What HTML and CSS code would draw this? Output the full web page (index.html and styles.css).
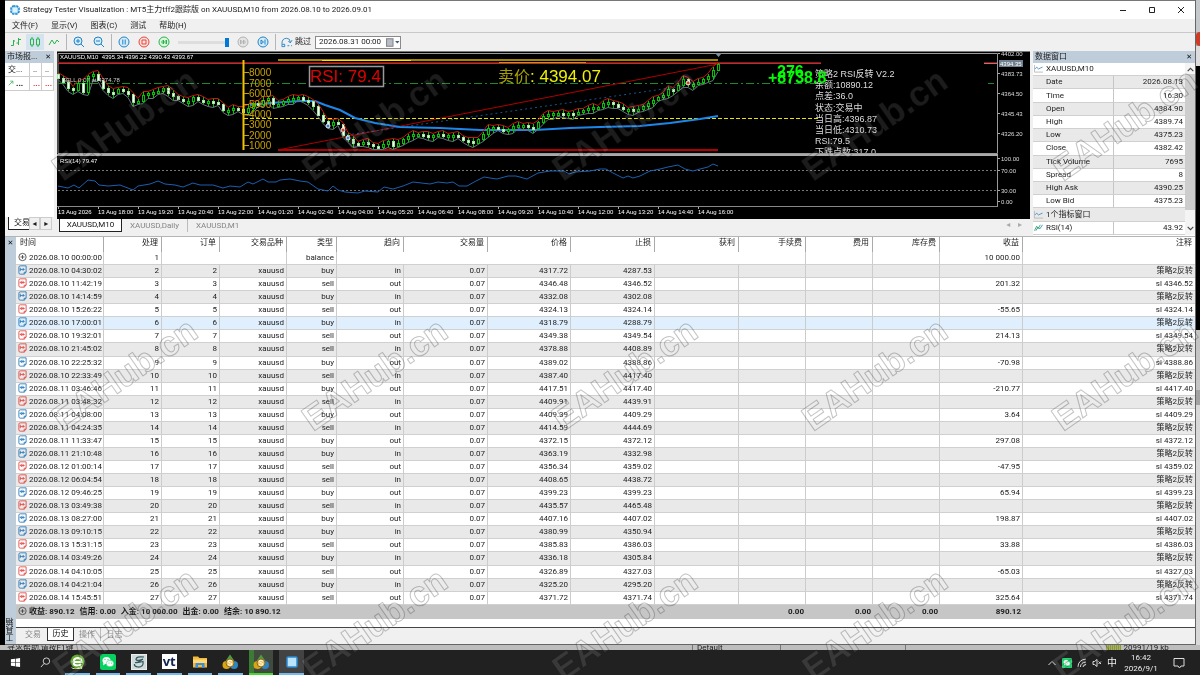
FILE: index.html
```html
<!DOCTYPE html>
<html lang="zh-CN">
<head>
<meta charset="utf-8">
<title>Strategy Tester Visualization</title>
<link rel="stylesheet" href="styles.css">
</head>
<body>
<svg class="sprite" aria-hidden="true">
  <symbol id="doc-in" viewBox="0 0 16 18"><path d="M4 1.5H14.5V13L11 16.5H4M4 1.5Q1.5 1.5 1.5 4V14Q1.500 16.500 4 16.500M14.500 13H11V16.500M4 8H11M8.500 5.500L11 8L8.500 10.500M4 5V11"/></symbol>
  <symbol id="doc-out" viewBox="0 0 16 18"><path d="M4 1.5H14.5V13L11 16.5H4M4 1.5Q1.5 1.5 1.5 4V14Q1.500 16.500 4 16.500M14.500 13H11V16.500M4 8H12M7 5L4 8L7 11M9 5.500V10.500"/></symbol>
  <symbol id="plus" viewBox="0 0 16 16"><circle cx="8" cy="8" r="6.500"/><path d="M4.500 8H11.500M8 4.500V11.500"/></symbol>
  <symbol id="wave" viewBox="0 0 20 18"><path class="axis" d="M1 1V17H20"/><path d="M2 10L6 6L10 10L14 8L19 6"/></symbol>
  <symbol id="mt" viewBox="0 0 32 32"><path fill="#4b9b3f" d="M16 1L25 14H7Z"/><circle cx="9" cy="22" r="8" fill="#d9a514"/><circle cx="24" cy="22" r="8" fill="#2b86c5"/><circle cx="16" cy="18" r="8" fill="#f2c45a" stroke="#8a6a2c" stroke-width="2"/><path d="M20 14Q12 11 12.500 15Q13 18 17 18Q21 19 19 22Q16 24 12 21" fill="none" stroke="#fff" stroke-width="2"/></symbol>
  <symbol id="chat" viewBox="0 0 32 32"><rect width="32" height="32" rx="5" fill="#07d160"/><ellipse cx="13" cy="13" rx="8" ry="7" fill="#fff"/><path d="M7 17L6 23L12 19Z" fill="#fff"/><ellipse cx="20" cy="19" rx="7.500" ry="6.500" fill="#fff" stroke="#07d160"/><g fill="#07d160"><circle cx="10" cy="11" r="1.200"/><circle cx="16" cy="11" r="1.200"/><circle cx="18" cy="18" r="1"/><circle cx="23" cy="18" r="1"/></g></symbol>
</svg>

<div class="desktop">
  <div class="edge-left"></div>
  <main class="window">
    <header class="title">
      <svg class="i10" viewBox="0 0 20 20"><path d="M6 2H14L18 6V14L14 18H6L2 14V6Z" fill="#a9dcf7" stroke="#2187cd" stroke-width="3" stroke-dasharray="5 1.500"/><path d="M6 6H14V14H6Z" fill="#dff3ff"/></svg>
      <h1>Strategy Tester Visualization : MT5主力tff2跟踪版 on XAUUSD,M10 from 2026.08.10 to 2026.09.01</h1>
      <button aria-label="Minimize"><svg viewBox="0 0 8 8"><path d="M1 4.500H7"/></svg></button>
      <button aria-label="Maximize"><svg viewBox="0 0 8 8"><path d="M1.500 1.500H6.500V6.500H1.500Z"/></svg></button>
      <button aria-label="Close"><svg viewBox="0 0 8 8"><path d="M1 1L7 7M7 1L1 7"/></svg></button>
    </header>
    <nav class="menu">
      <button>文件(F)</button><button>显示(V)</button><button>图表(C)</button><button>测试</button><button>帮助(H)</button>
    </nav>
    <div class="toolbar">
      <button aria-label="Bars"><svg class="g" viewBox="0 0 12 12"><path d="M1 9.500H3.500V4M3.500 5H5M8.500 2V9M6.500 7H8.500M8.500 3.500H11"/></svg></button>
      <button aria-label="Candles" class="on"><svg class="g" viewBox="0 0 12 12"><path d="M1.500 3H4.500V9H1.500ZM7.500 3H10.500V9H7.500ZM3 1V3M3 9V11M9 1V3M9 9V11"/></svg></button>
      <button aria-label="Line"><svg class="g" viewBox="0 0 12 12"><path d="M1 9L4 4L6.500 8L9 4L11 6"/></svg></button>
      <i class="sep"></i>
      <button aria-label="Zoom in"><svg class="b" viewBox="0 0 12 12"><circle cx="5" cy="5" r="4" fill="#d5ecfb"/><path d="M8 8L11 11M3 5H7M5 3V7"/></svg></button>
      <button aria-label="Zoom out"><svg class="b" viewBox="0 0 12 12"><circle cx="5" cy="5" r="4" fill="#d5ecfb"/><path d="M8 8L11 11M3 5H7"/></svg></button>
      <i class="sep"></i>
      <button aria-label="Pause"><svg class="b" viewBox="0 0 12 12"><circle cx="6" cy="6" r="5" fill="#d5ecfb"/><path d="M4.800 3.500V8.500M7.200 3.500V8.500"/></svg></button>
      <button aria-label="Stop"><svg class="r" viewBox="0 0 12 12"><circle cx="6" cy="6" r="5" fill="#fde0dd"/><path d="M4 4H8V8H4Z"/></svg></button>
      <button aria-label="Rewind"><svg class="g" viewBox="0 0 12 12"><circle cx="6" cy="6" r="5" fill="#d9f7dc"/><path d="M5.500 4L3.500 6L5.500 8ZM8.500 4L6.500 6L8.500 8Z"/></svg></button>
      <input class="speed" type="range" min="0" max="100" value="100" aria-label="Speed">
      <button aria-label="Forward"><svg class="k" viewBox="0 0 12 12"><circle cx="6" cy="6" r="5" fill="#e4e4e4"/><path d="M3.500 4L5.500 6L3.500 8ZM6.500 4L8.500 6L6.500 8Z"/></svg></button>
      <button aria-label="Step"><svg class="b" viewBox="0 0 12 12"><circle cx="6" cy="6" r="5" fill="#d5ecfb"/><path d="M4 4L6.500 6L4 8ZM8 3.500V8.500"/></svg></button>
      <i class="sep"></i>
      <label class="skip" for="skip-to"><svg class="b" viewBox="0 0 13 12"><path d="M1 8Q1 2 6 2Q10 2 10 6M8 5L10 7L12 4M1 8.500H4V11H1ZM7 10H9M11 10H12"/></svg>跳过</label>
      <span class="date"><input id="skip-to" type="text" value="2026.08.31 00:00"><button aria-label="Calendar"><svg viewBox="0 0 13 8"><rect x=".5" y=".5" width="6" height="7" fill="#b9bcc2" stroke="#85898f"/><path d="M8.500 2.500H12.500L10.500 5Z" fill="#3d5a86"/></svg></button></span>
    </div>

    <section class="upper">
      <aside class="market">
        <div class="cap"><span>市场报...</span><button aria-label="Close market watch">✕</button></div>
        <table class="quotes">
          <tr><td>交...</td><td>..</td><td>..</td></tr>
          <tr class="down"><td><svg class="g" viewBox="0 0 8 8"><path d="M1 7L6 2M3 1.500H6.500V5"/></svg> <b>...</b></td><td>...</td><td>...</td></tr>
        </table>
        <div class="mtabs"><button class="mtab">交易</button><button class="arr" aria-label="Left">◂</button><button class="arr" aria-label="Right">▸</button></div>
      </aside>
      <div class="chartcol">
        <svg id="chart" class="chart" viewBox="57 51 973 168" role="img" aria-label="XAUUSD M10"></svg>
        <div class="ctabs"><button class="on">XAUUSD,M10</button><button>XAUUSD,Daily</button><button>XAUUSD,M1</button><span class="pager">◂ &nbsp; ▸</span></div>
      </div>
      <aside class="data">
        <div class="cap"><span>数据窗口</span><button aria-label="Close data window">✕</button></div>
        <div class="dbody">
          <table>
            <tr><th colspan="2" class="grp"><svg class="w"><use href="#wave"/></svg>XAUUSD,M10</th></tr>
            <tr><th>Date</th><td>2026.08.13</td></tr>
            <tr><th>Time</th><td>16:30</td></tr>
            <tr><th>Open</th><td>4384.90</td></tr>
            <tr><th>High</th><td>4389.74</td></tr>
            <tr><th>Low</th><td>4375.23</td></tr>
            <tr><th>Close</th><td>4382.42</td></tr>
            <tr><th>Tick Volume</th><td>7695</td></tr>
            <tr><th>Spread</th><td>8</td></tr>
            <tr><th>High Ask</th><td>4390.25</td></tr>
            <tr><th>Low Bid</th><td>4375.23</td></tr>
            <tr class="shade"><th colspan="2" class="grp"><svg class="w"><use href="#wave"/></svg>1个指标窗口</th></tr>
            <tr class="plain"><th class="grp"><svg class="w ind" viewBox="0 0 20 18"><path class="gr" d="M1 16L6 6L9 12L14 3"/><path d="M4 16L9 8L13 12L19 3"/></svg>RSI(14)</th><td>43.92</td></tr>
          </table>
          <div class="scroll"><svg viewBox="0 0 8 8"><path d="M1.500 5.500L4 3L6.500 5.500"/></svg><i></i><svg viewBox="0 0 8 8"><path d="M1.500 2.500L4 5L6.500 2.500"/></svg></div>
        </div>
      </aside>
    </section>

    <section class="toolbox">
      <div class="side"><button aria-label="Close toolbox">✕</button><span>工具箱</span></div>
      <div class="tbody">
        <table class="deals">
          <colgroup><col class="c88"><col class="c58"><col class="c58"><col class="c67"><col class="c50"><col class="c67"><col class="c84"><col class="c83"><col class="c84"><col class="c84"><col class="c67"><col class="c67"><col class="c67"><col class="c83"><col></colgroup>
          <thead><tr><th>时间</th><th>处理</th><th>订单</th><th>交易品种</th><th>类型</th><th>趋向</th><th>交易量</th><th>价格</th><th>止损</th><th>获利</th><th>手续费</th><th>费用</th><th>库存费</th><th>收益</th><th>注释</th></tr></thead>
          <tbody id="deals">
            <tr><td><svg class="d dark"><use href="#plus"/></svg>2026.08.10 00:00:00</td><td>1</td><td colspan="2"></td><td>balance</td><td colspan="6" class="wide"></td><td></td><td></td><td>10 000.00</td><td></td></tr>
          </tbody>
          <tfoot><tr><td colspan="10"><svg class="d dark"><use href="#plus"/></svg><span>收益: 890.12</span><span>信用: 0.00</span><span>入金: 10 000.00</span><span>出金: 0.00</span><span>结余: 10 890.12</span></td><td>0.00</td><td>0.00</td><td>0.00</td><td>890.12</td><td></td></tr></tfoot>
        </table>
        <div class="btabs"><button>交易</button><button class="on">历史</button><button class="bar">操作</button><button>日志</button></div>
      </div>
    </section>
  </main>
  <div class="edge-right"><i class="e1"></i><i class="e2"></i><i class="e3"></i><i class="e4"></i><i class="e5"></i></div>
</div>
<div class="behind"><span class="b1">寻求帮助,请按F1键</span><span class="b2">Default</span><i class="s1"></i><i class="s2"></i><span class="b3"><svg viewBox="0 0 15 5"><path d="M0 2.500H15" stroke="#8f9b2c" stroke-width="5" stroke-dasharray="1.500 .5"/></svg>20991/19 kb</span></div>

<footer class="taskbar">
  <button class="sys" aria-label="Start"><svg viewBox="0 0 12 12"><path fill="#fff" d="M1 2.500L5.500 2V5.700H1ZM6.200 1.800L11 1V5.700H6.200ZM1 6.400H5.500V10.200L1 9.600ZM6.200 6.400H11V11L6.200 10.300Z"/></svg></button>
  <button class="sys" aria-label="Search"><svg viewBox="0 0 12 12"><circle cx="7" cy="4.500" r="3.500" fill="none" stroke="#ddd"/><path d="M4.500 7L1 11" stroke="#ddd"/></svg></button>
  <div class="apps">
    <button aria-label="Browser"><svg viewBox="0 0 32 32"><circle cx="17" cy="15" r="14" fill="#61ae2e"/><path d="M9 16H25Q25 8 17 8Q9 9 9 16Q9 23 17 23Q22 23 24 20" fill="none" stroke="#fff" stroke-width="4"/><path d="M3 26Q14 32 28 22L26 30H8Z" fill="#c9ec9b"/></svg></button>
    <button aria-label="WeChat"><svg><use href="#chat"/></svg></button>
    <button aria-label="Editor"><svg viewBox="0 0 32 32"><rect width="32" height="32" fill="#e8eeee"/><rect x="2" y="2" width="28" height="28" fill="#cfdada"/><path d="M26 6Q10 4 10 11Q11 15 24 10M24 10Q14 18 8 17Q15 18 24 15Q26 26 14 26Q6 25 7 20" fill="none" stroke="#33585d" stroke-width="2.500"/></svg></button>
    <button aria-label="VT"><span class="vt">vt</span></button>
    <button aria-label="Files"><svg viewBox="0 0 32 32"><path fill="#f5b93b" d="M2 5H12L15 8H30V27H2Z"/><path fill="#ffd977" d="M2 11H30V18H2Z"/><path fill="#3a8fd8" d="M7 18H25V28H20V22H12V28H7Z"/></svg></button>
    <button aria-label="MetaTrader"><svg><use href="#mt"/></svg></button>
    <button aria-label="MetaTrader 2" class="active"><svg><use href="#mt"/></svg></button>
    <button aria-label="Tester" class="open"><svg viewBox="0 0 32 32"><rect x="6" y="6" width="20" height="20" rx="2" fill="#b9e2fb" stroke="#2c8bd0" stroke-width="3"/></svg></button>
  </div>
  <div class="tray">
    <svg viewBox="0 0 10 10"><path d="M1.500 7L5 3.500L8.500 7"/></svg>
    <svg><use href="#chat"/></svg>
    <svg viewBox="0 0 10 10"><path d="M1 9Q1 2 9 1M3.500 9Q3.500 4.500 9 4M6 9Q6 7 9 6.500"/></svg>
    <svg viewBox="0 0 10 10"><path d="M1 3.500H2.500L5 1.500V8.500L2.500 6.500H1ZM6.500 3.500L9 6M9 3.500L6.500 6"/></svg>
    <span class="ime">中</span>
    <time><span>16:42</span><span>2026/9/1</span></time>
    <svg class="note" viewBox="0 0 12 12"><path d="M1 1.500H11V9H8L6.500 11L5 9H1Z"/></svg>
  </div>
</footer>

<svg class="mark fill" aria-hidden="true"><defs><pattern id="wm-fill" width="250" height="250" patternUnits="userSpaceOnUse"><text transform="translate(63 182) rotate(-35)">EAHub.cn</text></pattern></defs><rect width="100%" height="100%" fill="url(#wm-fill)"/></svg>
<svg class="mark line" aria-hidden="true"><defs><pattern id="wm-line" width="250" height="250" patternUnits="userSpaceOnUse"><text transform="translate(63 182) rotate(-35)">EAHub.cn</text></pattern></defs><rect width="100%" height="100%" fill="url(#wm-line)"/></svg>
<script src="script.js"></script>
</body>
</html>
```
FILE: styles.css
```css
* { box-sizing: border-box; }
body {
  margin: 0; min-height: 100vh; display: flex; flex-direction: column;
  background: #000; color: #1c1c1c;
  font: 8px/12px Roboto, "Noto Sans CJK SC", sans-serif;
}
button, input { font: inherit; color: inherit; border: 0; background: none; padding: 0; margin: 0; }
h1 { font: inherit; margin: 0; flex: 1; }
table { border-collapse: separate; border-spacing: 0; }
svg { display: block; fill: none; }
.sprite { position: absolute; width: 0; height: 0; }

.desktop { flex: 1; display: grid; grid-template-columns: 5px 1fr 5px; }
.window { background: #f0f0f0; border-top: 1px solid #777; border-bottom: 1px solid #666; min-width: 0; display: flex; flex-direction: column; }
.edge-left { background: #000; }
.edge-right { display: flex; flex-direction: column; border-left: 1px solid #666; background: #aaa; }
.edge-right i { display: block; }
.e1 { height: 32px; background: #c6c9cc; }
.e2 { height: 14px; background: #cf3b26; border-radius: 4px 0 0 4px; }
.e3 { height: 20px; background: #dcdcdc; }
.e4 { height: 264px; background: #000; }
.e5 { flex: 1; background: linear-gradient(#c4c4c4 60px, #a2a2a2 60px 75px, #d8d8d8 75px); }

.title { display: flex; align-items: center; height: 18px; background: #fff; padding-left: 5px; }
.title h1 { padding-left: 3px; }
.i10 { width: 10px; height: 10px; }
.title button { width: 29px; display: flex; justify-content: center; }
.title button svg { width: 8px; height: 8px; stroke: #222; stroke-width: 1; }

.menu { display: flex; gap: 13px; height: 14px; padding-left: 7px; align-items: center; border-bottom: 1px solid #c9c9c9; }
.toolbar { display: flex; align-items: center; height: 18px; padding-left: 1px; }
.toolbar button { width: 20px; height: 16px; display: flex; align-items: center; justify-content: center; }
.toolbar button.on { background: #d3e4f0; width: 18px; }
.toolbar svg { width: 12px; height: 12px; }
.sep { width: 1px; height: 16px; background: #b5b5b5; margin: 0 2px; }
.g { stroke: #2bb24c; } .b { stroke: #2383c4; } .r { stroke: #e3483d; } .k { stroke: #b2b2b2; }
.speed { appearance: none; width: 51px; height: 9px; margin: 0 4px; background: linear-gradient(#ddd, #ddd) center / 100% 3px no-repeat; }
.speed::-webkit-slider-thumb { appearance: none; width: 4px; height: 9px; background: #0078d7; }
.skip { display: flex; align-items: center; gap: 2px; padding-left: 3px; }
.date { display: flex; align-items: center; height: 13px; width: 86px; margin-left: 4px; background: #fff; border: 1px solid #8a8a8a; }
.date input { flex: 1; min-width: 0; padding-left: 3px; }
.date button, .date button svg { width: 14px; height: 9px; }

.upper { display: flex; gap: 3px; height: 185px; }
.cap { display: flex; justify-content: space-between; align-items: center; height: 12px; background: #bfcddb; padding: 0 3px 0 2px; }
.cap span { white-space: nowrap; }
.cap button, .side button { font: bold 7px/8px "DejaVu Sans", sans-serif; color: #111; }
.market { width: 49px; background: #fff; display: flex; flex-direction: column; }
.quotes { width: 100%; table-layout: fixed; }
.quotes td { height: 14px; padding: 0 3px; border-right: 1px solid #ccc; border-bottom: 1px solid #ccc; }
.quotes td:first-child { width: 25px; }
.quotes svg { display: inline; width: 6px; height: 6px; }
.quotes b { color: #222; }
.down { color: #e02020; font-weight: bold; }
.mtabs { margin-top: auto; display: flex; height: 19px; padding: 0 2px 6px 3px; background: #f0f0f0; }
.mtab { width: 21px; overflow: hidden; white-space: nowrap; padding-left: 5px; background: #fff; border-left: 1px solid #222; border-bottom: 1px solid #222; }
.arr { width: 12px; border: 1px solid #ccc; font-family: "DejaVu Sans", sans-serif; line-height: 10px; }

.chartcol { flex: 1; min-width: 0; }
.chart { width: 100%; background: #000; font-family: "Liberation Sans", "Noto Sans CJK SC", sans-serif; }
.ctabs { display: flex; height: 17px; padding-left: 2px; align-items: flex-start; color: #858585; }
.ctabs button { height: 13px; padding: 0 8px; border-right: 1px solid #bbb; line-height: 12px; }
.ctabs button:nth-child(3) { border: 0; }
.ctabs button.on { width: 63px; padding: 0; background: #fff; color: #111; border: 1px solid #222; border-top: 0; }
.pager { margin-left: auto; padding-right: 8px; font-family: "DejaVu Sans", sans-serif; color: #aaa; }

.data { width: 162px; background: #fff; }
.dbody { display: flex; }
.dbody table { flex: 1; height: 172px; }
.dbody th { font-weight: normal; text-align: left; padding: 0 0 0 13px; line-height: 12px; border-bottom: 1px solid #d0d0d0; border-right: 1px solid #c6c6c6; }
.dbody th[colspan] { border-right: 0; }
.dbody td { text-align: right; padding: 0 2px 0 0; width: 71px; border-bottom: 1px solid #d0d0d0; }
.dbody tr:nth-child(even), .dbody tr.shade { background: #e9e9e9; }
.dbody .plain { background: #fff; }
.dbody .grp { padding-left: 1px; }
.w { display: inline-block; vertical-align: -2px; width: 9px; height: 9px; margin-right: 3px; stroke: #3c8fc8; stroke-width: 2; }
.axis { stroke: #b8b8b8; } .gr { stroke: #35b34f; }
.scroll { width: 10px; display: flex; flex-direction: column; align-items: center; padding: 2px 0; background: #f4f4f4; }
.scroll svg { width: 9px; height: 9px; stroke: #444; }
.scroll i { height: 136px; width: 10px; background: #cdcdcd; margin-bottom: auto; }

.toolbox { display: flex; flex: 1; border-top: 1px solid #b5b5b5; background: #fff; }
.side { width: 11px; background: #bfcddb; display: flex; flex-direction: column; align-items: center; justify-content: space-between; padding: 2px 0; }
.side span { writing-mode: vertical-rl; transform: rotate(180deg); }
.tbody { flex: 1; min-width: 0; display: flex; flex-direction: column; }
.deals { width: 100%; height: 382px; table-layout: fixed; }
.c88 { width: 88px; } .c58 { width: 58px; } .c67 { width: 67px; } .c50 { width: 50px; } .c84 { width: 84px; } .c83 { width: 83px; }
.deals th, .deals td { padding: 0 2px 0 0; text-align: right; font-weight: normal; white-space: nowrap; border-right: 1px solid #ccc; }
.deals th { height: 15px; padding-right: 3px; border-color: #aaa; vertical-align: top; }
.deals tbody td { border-bottom: 1px solid #d0d0d0; line-height: 12px; }
.deals tr > :last-child { border-right: 0; }
.deals tr > :first-child { text-align: left; padding: 0 0 0 2px; }
.deals th:first-child { padding-left: 4px; }
.deals tbody tr:nth-child(even) { background: #e9e9e9; }
.deals tbody tr.sel { background: #dfeffd; }
.deals tfoot td { background: #c6c6c6; height: 14px; border: 0; font-weight: bold; }
.deals tfoot span { margin-right: 5px; }
.d { display: inline-block; vertical-align: -2px; width: 9px; height: 10px; margin-right: 2px; stroke-width: 1.500; }
.d.buy { stroke: #1c74b8; } .d.sell { stroke: #e0403a; } .d.dark { stroke: #444; }
.btabs { margin-top: auto; height: 17px; display: flex; align-items: flex-start; border-top: 1px solid #444; background: #f0f0f0; color: #888; }
.btabs button { width: 27px; height: 13px; }
.btabs button:first-child { width: 31px; padding-left: 3px; }
.btabs button.on { background: #fff; color: #111; border: 1px solid #333; border-top: 0; }
.btabs .bar { border-right: 1px solid #bbb; }

.behind { height: 5px; overflow: hidden; display: flex; background: #bdbdbd; line-height: 6px; padding-left: 7px; }
.b1 { flex: 689; } .b2 { flex: 84; border-left: 1px solid #777; padding-left: 4px; }
.behind i { border-left: 1px solid #777; }
.s1 { flex: 124; } .s2 { flex: 201; }
.b3 { flex: 95; display: flex; gap: 3px; }
.b3 svg { width: 15px; height: 5px; }

.taskbar { height: 25px; display: flex; align-items: center; background: #212121; color: #eee; padding: 0 2px 0 0; }
.sys { width: 30px; display: flex; justify-content: center; }
.sys svg { width: 11px; height: 11px; }
.apps { display: grid; grid-template-columns: repeat(8, 1fr); gap: 6px; width: 239px; margin-left: 5px; height: 25px; }
.apps button { display: flex; align-items: center; justify-content: center; border-bottom: 2px solid #76b9ed; }
.apps svg { width: 16px; height: 16px; }
.apps .active { background: linear-gradient(90deg, #3c7a35 5px, #42493f 5px); border-color: #49d735; }
.apps .open { background: #434343; }
.vt { width: 15px; height: 15px; background: #fff; color: #10244f; font: bold 13px/14px "Open Sans", sans-serif; }
.tray { margin-left: auto; display: flex; align-items: center; gap: 5px; padding-right: 13px; }
.tray svg { width: 10px; height: 10px; stroke: #ddd; stroke-width: 1; }
.tray .note { width: 12px; height: 12px; margin-left: 8px; }
.ime { font-size: 10px; }
.tray time { display: flex; flex-direction: column; align-items: center; width: 38px; line-height: 11px; }

.mark { position: absolute; top: 0; left: 0; width: 100%; height: 100%; pointer-events: none; font: bold 35px "Liberation Sans", sans-serif; }
.fill text { fill: rgba(255, 255, 255, .11); }
.line { mix-blend-mode: multiply; }
.line text { stroke: #c4c4c4; stroke-width: 1; stroke-linejoin: round; }
```
FILE: script.js
```js
const deals = `2026.08.10 04:30:02|buy|in|4317.72|4287.53
2026.08.10 11:42:19|sell|out|4346.48|4346.52|201.32
2026.08.10 14:14:59|buy|in|4332.08|4302.08
2026.08.10 15:26:22|sell|out|4324.13|4324.14|-55.65
2026.08.10 17:00:01|buy|in|4318.79|4288.79
2026.08.10 19:32:01|sell|out|4349.38|4349.54|214.13
2026.08.10 21:45:02|sell|in|4378.88|4408.89
2026.08.10 22:25:32|buy|out|4389.02|4388.86|-70.98
2026.08.10 22:33:49|sell|in|4387.40|4417.40
2026.08.11 03:46:46|buy|out|4417.51|4417.40|-210.77
2026.08.11 03:48:32|sell|in|4409.91|4439.91
2026.08.11 04:08:00|buy|out|4409.39|4409.29|3.64
2026.08.11 04:24:35|sell|in|4414.59|4444.69
2026.08.11 11:33:47|buy|out|4372.15|4372.12|297.08
2026.08.11 21:10:48|buy|in|4363.19|4332.98
2026.08.12 01:00:14|sell|out|4356.34|4359.02|-47.95
2026.08.12 06:04:54|sell|in|4408.65|4438.72
2026.08.12 09:46:25|buy|out|4399.23|4399.23|65.94
2026.08.13 03:49:38|sell|in|4435.57|4465.48
2026.08.13 08:27:00|buy|out|4407.16|4407.02|198.87
2026.08.13 09:10:15|buy|in|4380.99|4350.94
2026.08.13 15:31:15|sell|out|4385.83|4386.03|33.88
2026.08.14 03:49:26|buy|in|4336.18|4305.84
2026.08.14 04:10:05|sell|out|4326.89|4327.03|-65.03
2026.08.14 04:21:04|buy|in|4325.20|4295.20
2026.08.14 15:45:51|sell|out|4371.72|4371.74|325.64`.split("\n");

document.getElementById("deals").insertAdjacentHTML("beforeend", deals.map((line, i) => {
  const [time, side, dir, price, stop, profit = ""] = line.split("|");
  const note = dir === "in" ? "策略2反转" : "sl " + stop;
  const n = i + 2;
  return `<tr${n === 6 ? ' class="sel"' : ""}><td><svg class="d ${side}"><use href="#doc-${dir}"/></svg>${time}</td><td>${n}</td><td>${n}</td><td>xauusd</td><td>${side}</td><td>${dir}</td><td>0.07</td><td>${price}</td><td>${stop}</td><td></td><td></td><td></td><td></td><td>${profit}</td><td>${note}</td></tr>`;
}).join(""));

/* Price level of each bar, five units apart. */
const bars = [78,82,88,90,83,92,76,74,80,88,92,93,89,91,94,102,101,95,93,92,91,88,93,96,99,101,101,97,100,101,101,102,104,110,110,108,109,112,108,103,104,100,98,104,104,101,99,98,97,
100,101,106,115,121,125,122,124,135,139,143,144,142,144,146,147,144,141,146,143,139,136,134,134,135,136,135,134,135,135,135,137,140,141,143,139,134,128,127,129,130,129,126,125,125,127,128,122,116,114,113,113,114,113,114,112,110,108,107,107,
103,102,104,107,109,109,110,109,106,103,100,97,95,89,90,85,79,84,84,82,79,76,70,64];
const out = [];
const line = (x1, y1, x2, y2, c, w = 1, extra = "") => out.push(`<path d="M${x1} ${y1}L${x2} ${y2}" stroke="${c}" stroke-width="${w}" ${extra}/>`);
const poly = (pts, c, w = 1, extra = "") => out.push(`<polyline points="${pts}" stroke="${c}" stroke-width="${w}" ${extra}/>`);
const text = (x, y, s, size, c, extra = "") => out.push(`<text x="${x}" y="${y}" font-size="${size}" fill="${c}" ${extra}>${s}</text>`);

line(57, 51.5, 1030, 51.5, "#777");
out.push('<path d="M58 153.500V53.500H997.500V153.500Z" stroke="#999"/>');
line(57, 155, 998, 155, "#aaa", 2);
line(997.5, 156, 997.5, 206, "#999");
line(57, 206.5, 998, 206.5, "#888");
line(58, 83.5, 820, 83.5, "#1b8a2b", 1, 'stroke-dasharray="8 3 2 3"');
line(988, 83.5, 994, 83.5, "#1b8a2b");
line(58, 62.5, 821, 62.5, "#c00000", 1);
line(58, 63.5, 821, 63.5, "#7a4a4a", 1);
line(984, 62.5, 997, 62.5, "#c00000");
line(984, 63.5, 997, 63.5, "#888");
line(278, 60, 718, 60, "#a68400", 2);
line(322, 60.5, 411, 60.5, "#ffdc00");
line(499, 62.5, 586, 62.5, "#ff7800");
line(278, 150, 718, 150, "#b00000", 2);
line(278, 150, 718, 64, "#b00000");
line(347, 135, 684, 86, "#17538c", 1, 'stroke-dasharray="2 3"');
line(244, 118.5, 820, 118.5, "#e6e600", 1, 'stroke-dasharray="4 2"');

const highs = [], lows = [];
let body = "";
bars.forEach((v, i) => {
  const x = 58 + i * 5, p = i ? bars[i - 1] : v - 4;
  const top = Math.min(p, v), h = Math.max(2, Math.abs(p - v));
  const hi = top - 1 - (i * 7) % 3, lo = Math.min(149, top + h + 1 + (i * 5) % 4);
  highs.push(`${x},${hi - .5}`); lows.push(`${x},${lo + .5}`);
  body += `<path d="M${x + .5} ${hi}V${lo}" stroke="#00c800"/><rect x="${x - .5}" y="${top + .5}" width="2" height="${h}" fill="${v > p ? "#fff" : "#000"}" stroke="${v > p ? "#9fe89f" : "#00c800"}"/>`;
});
poly("250,105 270,103 300,101 315,101 325,105 340,110 355,118 375,123 400,127 440,128 480,130 535,130 570,128 600,127 640,126 670,123 700,119 718,116", "#1e86e8", 2);
poly(lows.join(" "), "#687080");
out.push(body);
poly(highs.join(" "), "#c81414");
for (const [x, y, c] of [[328, 126, "#2b7fd0"], [348, 138, "#2b7fd0"], [343, 130, "#e04020"], [688, 83, "#e04020"]])
  out.push(`<circle cx="${x}" cy="${y}" r="2" fill="${c}" stroke="#eee"/>`);

line(243.5, 60, 243.5, 150, "#f0c400", 2);
[72, 83, 93, 104, 114, 124, 135, 145].forEach((y, i) => {
  line(244, y + .5, 249, y + .5, "#c8a000");
  text(249, y + 4, (8 - i) * 1000, 10, "#c8a000");
});
out.push('<rect x="309.500" y="66.500" width="74" height="20" fill="#000" stroke="#999" stroke-width="1.500"/>');
text(310, 82, "RSI: 79.4", 17, "#e00000");
text(498, 82, '<tspan fill="#a8a000" font-size="16">卖价</tspan>: 4394.07', 17, "#f0f000");
out.push('<path d="M715 53H722L718.500 57Z" fill="#8090a0"/>');
text(60, 59, "XAUUSD,M10 &#160;4395.34 4396.22 4390.43 4393.67", 6, "#fff");
text(62, 82, "SELL 0.07 at 4374.78", 6, "#ccc");

["策略2 RSI反转 V2.2", "余额:10890.12", "点差:36.0", "状态:交易中", "当日高:4396.87", "当日低:4310.73", "RSI:79.5"].forEach((s, i) => text(815, 77 + Math.round(i * 11.2), s, 9, "#ddd"));
out.push('<clipPath id="pane"><path d="M58 53H997V153H58Z"/></clipPath>');
text(815, 155, "下跌点数:317.0", 9, "#ddd", 'clip-path="url(#pane)"');
text(768, 83, "+8738.8", 16, "#0f0", 'font-weight="bold"');
text(777, 77, "276", 16, "#0f0", 'font-weight="bold"');

[[56, "4402.00"], [76, "4383.73"], [96, "4364.50"], [116, "4345.43"], [136, "4326.20"], [161, "100.00"], [173, "70.00"], [193, "30.00"], [204, "0.00"]].forEach(([y, s]) => {
  line(998, y - 2.5, 1000, y - 2.5, "#aaa");
  text(1001, y, s, 6, "#ddd");
});
out.push('<rect x="999" y="60" width="24" height="7" fill="#708090"/>');
text(1000, 66, "4394.35", 6, "#fff");

for (const y of [170.5, 190.5]) line(58, y, 997, y, "#777", 1, 'stroke-dasharray="2 2"');
poly("58,186 68,188 74,185 79,188 88,180 95,181 99,185 108,186 120,185 133,190 138,186 150,184 158,181 165,184 175,185 183,187 193,183 200,185 213,185 223,188 230,186 240,187 248,182 253,184 263,179 268,182 276,182 280,180 290,179 300,181 308,182 318,189 328,191 333,186 338,190 345,192 358,193 365,191 378,192 384,187 393,189 403,186 413,182 430,184 438,182 447,183 453,182 459,186 467,186 476,181 484,177 490,178 497,179 508,176 516,176 527,179 538,173 550,171 564,171 569,174 575,172 590,171 600,169 606,169 613,173 623,178 628,176 633,178 640,176 650,171 660,169 668,167 678,165 685,169 693,171 700,169 708,167 713,164 718,166", "#1b5fae");
text(60, 163, "RSI(14) 79.47", 6, "#fff");
["13 Aug 2026", "13 Aug 18:00", "13 Aug 19:20", "13 Aug 20:40", "13 Aug 22:00", "14 Aug 01:20", "14 Aug 02:40", "14 Aug 04:00", "14 Aug 05:20", "14 Aug 06:40", "14 Aug 08:00", "14 Aug 09:20", "14 Aug 10:40", "14 Aug 12:00", "14 Aug 13:20", "14 Aug 14:40", "14 Aug 16:00"].forEach((s, i) => {
  line(58.5 + i * 40, 207, 58.5 + i * 40, 209, "#aaa");
  text(58 + i * 40, 214, s, 6, "#fff");
});
document.getElementById("chart").innerHTML = out.join("");
```
